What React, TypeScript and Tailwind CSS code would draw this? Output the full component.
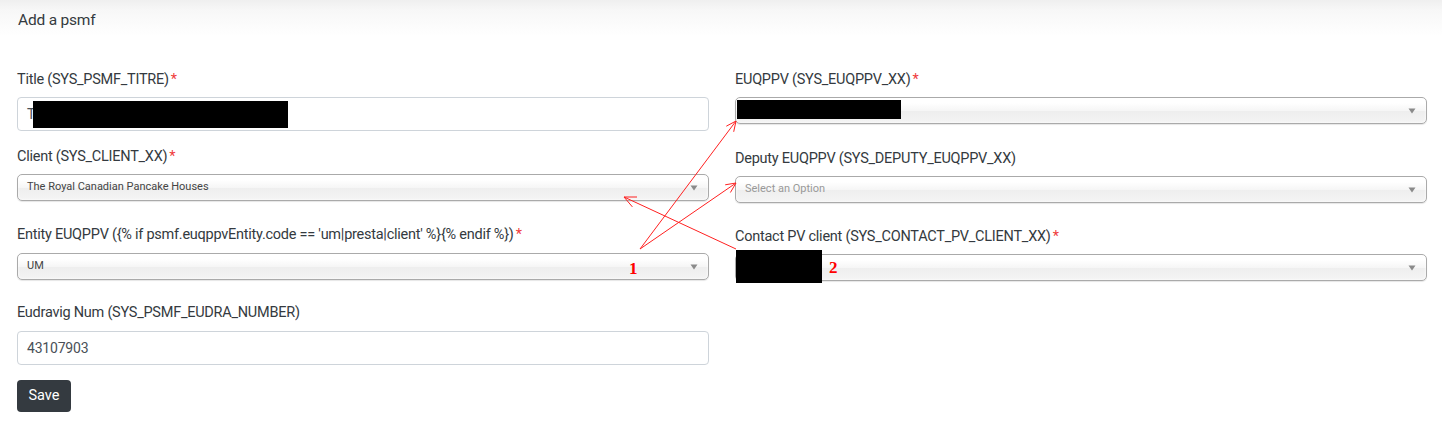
import React from 'react'

const font = "font-['Roboto',sans-serif]"

function Label({ text, required }: { text: string; required?: boolean }) {
  return (
    <label className={`block h-[20px] leading-[20px] text-[14.5px] tracking-[-0.25px] text-[#343a40] ${font}`}>
      {text}
      {required && <span className="ml-[2px] text-[#ef3b3b]">*</span>}
    </label>
  )
}

function Caret() {
  return (
    <svg width="8" height="6" viewBox="0 0 8 6" className="shrink-0">
      <path d="M0.5 0.5 L7.5 0.5 L4 5.5 Z" fill="#8a8a8a" />
    </svg>
  )
}

function Chosen({ value, placeholder, children }: { value?: string; placeholder?: string; children?: React.ReactNode }) {
  return (
    <div className="relative flex h-[27px] items-center justify-between rounded-[5px] border border-[#aaaaaa] bg-[linear-gradient(#ffffff_20%,#f6f6f6_50%,#eeeeee_52%,#f4f4f4_100%)] pl-[9px] pr-[10px] shadow-[inset_0_0_3px_#fff,0_1px_1px_rgba(0,0,0,0.1)]">
      <span className={`text-[11px] ${placeholder ? 'text-[#999999]' : 'text-[#444444]'}`}>{value ?? placeholder}</span>
      <Caret />
      {children}
    </div>
  )
}

export default function App() {
  return (
    <div className={`relative h-[425px] w-[1442px] overflow-hidden bg-white ${font}`}>
      {/* Card header */}
      <div className="h-[40px] bg-[linear-gradient(#efefef,#f7f7f7_25%,#ffffff_90%)] pl-[18px] pt-[9px]">
        <h1 className="text-[15.5px] leading-[22px] tracking-[-0.2px] text-[#343a40]">Add a psmf</h1>
      </div>

      {/* Form */}
      <div className="mt-[30px] grid grid-cols-2 gap-x-[26px] pl-[17px] pr-[15px]">
        <div className="flex flex-col">
          <Label text="Title (SYS_PSMF_TITRE)" required />
          <div className="relative mt-[7px] flex h-[34px] items-center rounded-[4px] border border-[#ced4da] pl-[9px]">
            <span className="text-[14px] text-[#495057]">T</span>
            <div className="absolute left-[15px] top-[3px] h-[27px] w-[255px] bg-black" />
          </div>

          <div className="mt-[16px]">
            <Label text="Client (SYS_CLIENT_XX)" required />
          </div>
          <div className="mt-[7px]">
            <Chosen value="The Royal Canadian Pancake Houses" />
          </div>

          <div className="mt-[24px]">
            <Label text="Entity EUQPPV ({% if psmf.euqppvEntity.code == 'um|presta|client' %}{% endif %})" required />
          </div>
          <div className="mt-[8px]">
            <Chosen value="UM" />
          </div>

          <div className="mt-[23px]">
            <Label text="Eudravig Num (SYS_PSMF_EUDRA_NUMBER)" />
          </div>
          <div className="mt-[8px] flex h-[34px] items-center rounded-[4px] border border-[#ced4da] pl-[9px]">
            <span className="text-[14px] tracking-[-0.2px] text-[#495057]">43107903</span>
          </div>

          <div className="mt-[15px]">
            <button className="h-[32px] w-[54px] rounded-[4px] bg-[#343a40] text-[14.5px] text-white">Save</button>
          </div>
        </div>

        <div className="flex flex-col">
          <Label text="EUQPPV (SYS_EUQPPV_XX)" required />
          <div className="mt-[7px]">
            <Chosen value="">
              <div className="absolute left-[1px] top-[2px] h-[19px] w-[164px] bg-black" />
            </Chosen>
          </div>

          <div className="mt-[25px]">
            <Label text="Deputy EUQPPV (SYS_DEPUTY_EUQPPV_XX)" />
          </div>
          <div className="mt-[7px]">
            <Chosen placeholder="Select an Option" />
          </div>

          <div className="mt-[24px]">
            <Label text="Contact PV client (SYS_CONTACT_PV_CLIENT_XX)" required />
          </div>
          <div className="mt-[7px]">
            <Chosen value="">
              <div className="absolute -top-[5px] left-0 h-[33px] w-[86px] bg-black" />
            </Chosen>
          </div>
        </div>
      </div>

      {/* Red annotations */}
      <svg className="pointer-events-none absolute left-0 top-0" width="1442" height="425">
        <g stroke="#ff2020" strokeWidth="1" fill="none">
          <line x1="640" y1="249" x2="736" y2="121" />
          <polyline points="726.3,126.2 736,121 733.7,131.8" />
          <line x1="640" y1="249" x2="736" y2="183" />
          <polyline points="725.2,184.8 736,183 730.4,192.5" />
          <line x1="736" y1="249" x2="624" y2="197" />
          <polyline points="632.4,206.9 624,197 637,197" />
        </g>
      </svg>
      <span className="absolute left-[629px] top-[261px] font-['Liberation_Serif',serif] text-[17px] font-bold leading-[16px] text-[#ff0000]">
        1
      </span>
      <span className="absolute left-[829px] top-[260px] font-['Liberation_Serif',serif] text-[17px] font-bold leading-[16px] text-[#ff0000]">
        2
      </span>
    </div>
  )
}
